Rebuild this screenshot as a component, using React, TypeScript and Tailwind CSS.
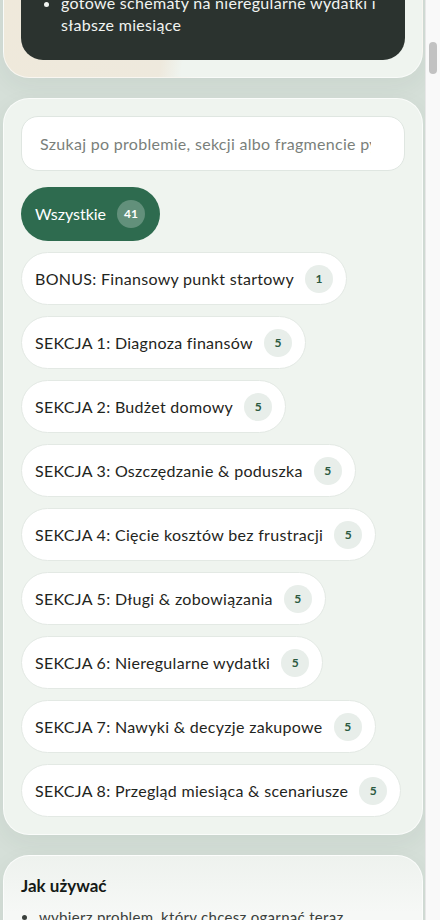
import React from "react";

const chips = [
  { label: "BONUS: Finansowy punkt startowy", count: 1 },
  { label: "SEKCJA 1: Diagnoza finansów", count: 5 },
  { label: "SEKCJA 2: Budżet domowy", count: 5 },
  { label: "SEKCJA 3: Oszczędzanie & poduszka", count: 5 },
  { label: "SEKCJA 4: Cięcie kosztów bez frustracji", count: 5 },
  { label: "SEKCJA 5: Długi & zobowiązania", count: 5 },
  { label: "SEKCJA 6: Nieregularne wydatki", count: 5 },
  { label: "SEKCJA 7: Nawyki & decyzje zakupowe", count: 5 },
  { label: "SEKCJA 8: Przegląd miesiąca & scenariusze", count: 5 },
];

export default function App() {
  return (
    <div className="flex h-[920px] w-[440px] overflow-hidden bg-[#d5dfd8] font-['Lato','Noto_Sans',sans-serif] text-[#1f2521]">
      <main className="flex w-[425px] flex-col gap-5 pl-[3px] pr-[2px]">
        {/* intro card, top cut off by scroll */}
        <section className="-mt-[46px] rounded-[26px] border border-white/60 bg-[linear-gradient(100deg,#efe9db_0%,#eee9dd_40%,#eff4ef_45%,#eff4ef_100%)] p-[17px] shadow-[0_8px_24px_rgba(40,70,50,0.06)]">
          <div className="rounded-[22px] bg-[#2b332f] px-[22px] pb-[24px] pt-[20px] text-[16px] leading-[22px] tracking-[0.3px] text-[#f1f4f1]">
            <ul className="list-disc pl-[18px] marker:text-[#f1f4f1]">
              <li>
                gotowe schematy na nieregularne wydatki i
                <br />
                słabsze miesiące
              </li>
            </ul>
          </div>
        </section>

        {/* filter card */}
        <section className="rounded-[26px] border border-white/70 bg-[#eff4ef] p-[17px] shadow-[0_8px_24px_rgba(40,70,50,0.06)]">
          <div className="flex h-[55px] items-center rounded-[17px] border border-[#dfe6e1] bg-white pl-[18px] pr-[33px]">
            <input
              className="w-full bg-transparent text-[16px] tracking-[0.3px] text-[#222] outline-none placeholder:text-[#7a7f7b]"
              placeholder="Szukaj po problemie, sekcji albo fragmencie pytania"
            />
          </div>

          <div className="mt-4 flex flex-col items-start gap-[11px] tracking-[0.3px]">
            <button className="flex h-[54px] items-center gap-[11px] rounded-full bg-[#2e6b4f] pl-[14px] pr-[15px] text-[16px] tracking-normal text-white">
              Wszystkie
              <span className="flex h-[28px] w-[28px] items-center justify-center rounded-full bg-white/25 text-[12px] font-bold">
                41
              </span>
            </button>
            {chips.map((c) => (
              <button
                key={c.label}
                className="flex h-[53px] items-center gap-[11px] rounded-full border border-[#e3e9e4] bg-white pl-[13px] pr-[13px] text-[16px] text-[#1f2521]"
              >
                {c.label}
                <span className="flex h-[28px] w-[28px] items-center justify-center rounded-full bg-[#e8eeea] text-[12px] font-bold tracking-normal text-[#2b5a41]">
                  {c.count}
                </span>
              </button>
            ))}
          </div>
        </section>

        {/* how to use */}
        <section className="rounded-[26px] border border-white/70 bg-[linear-gradient(180deg,#eef2ee_0%,#f6f8f6_60%)] px-[17px] pt-[18px] shadow-[0_8px_24px_rgba(40,70,50,0.06)]">
          <h2 className="text-[17px] font-bold leading-[24px] text-[#151a17]">Jak używać</h2>
          <ul className="mt-[8px] list-disc pl-[18px] text-[15px] leading-[22px] tracking-[0.3px] text-[#3a403c]">
            <li>wybierz problem, który chcesz ogarnąć teraz</li>
            <li>przejdź przez pytania po kolei</li>
          </ul>
        </section>
      </main>

      {/* scrollbar */}
      <div className="w-[15px] border-l border-[#e8e8e8] bg-[#f9f9f9] pt-[42px]">
        <div className="mx-auto h-[32px] w-[8px] rounded-full bg-[#c2c2c2]" />
      </div>
    </div>
  );
}
